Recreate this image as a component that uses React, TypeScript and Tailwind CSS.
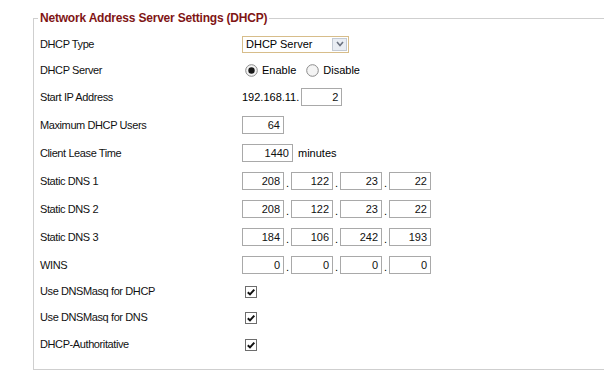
import React from "react";

const font = { fontFamily: '"Liberation Sans", Arial, sans-serif' };

function Box({ value, w = "w-[42px]" }: { value: string; w?: string }) {
  return (
    <span
      className={`${w} h-[18px] border border-[#a9a9a9] bg-white flex items-center justify-end pr-[3px] text-[11px] text-[#111]`}
    >
      {value}
    </span>
  );
}

function IP({ parts }: { parts: string[] }) {
  return (
    <div className="flex items-center">
      {parts.map((p, i) => (
        <React.Fragment key={i}>
          <Box value={p} />
          {i < parts.length - 1 && (
            <span className="w-[7px] text-center self-end pb-[1px] text-[11px] leading-[11px]">.</span>
          )}
        </React.Fragment>
      ))}
    </div>
  );
}

function Radio({ checked }: { checked: boolean }) {
  return (
    <svg width="13" height="13" viewBox="0 0 13 13" className="shrink-0">
      <circle cx="6.5" cy="6.5" r="5.8" fill="#f4f4f4" stroke="#8a8a8a" strokeWidth="1" />
      {checked && <circle cx="6.5" cy="6.5" r="3.2" fill="#1a1a1a" />}
    </svg>
  );
}

function Check() {
  return (
    <svg width="12" height="12" viewBox="0 0 12 12" className="shrink-0">
      <rect x="0.5" y="0.5" width="11" height="11" fill="#fff" stroke="#6d6d6d" />
      <path d="M2.8 6.2 L5 8.4 L9.3 3.6" fill="none" stroke="#111" strokeWidth="2" />
    </svg>
  );
}

function Row({ label, h, children }: { label: string; h: string; children: React.ReactNode }) {
  return (
    <div className={`flex items-center ${h}`}>
      <div className="w-[202px] shrink-0 text-[11px] tracking-[-0.4px] text-[#111]">{label}</div>
      <div className="flex items-center">{children}</div>
    </div>
  );
}

export default function App() {
  return (
    <div className="w-[604px] h-[377px] overflow-hidden bg-white" style={font}>
      <div className="pl-[33px] pt-[10px] w-[700px]">
        <fieldset className="border border-[#cfcfcf] pl-[4px] pb-[11px] w-[640px]">
          <legend className="px-[2px] text-[12px] font-bold text-[#7f1515] leading-[16px] tracking-[-0.2px]">
            Network Address Server Settings (DHCP)
          </legend>
          <div className="pl-[2px] pt-[5px]">
            <Row label="DHCP Type" h="h-[26px]">
              <div className="w-[107px] h-[17px] border border-[#d7bd8a] bg-white flex items-center justify-between text-[11px]">
                <span className="pl-[3px]">DHCP Server</span>
                <span className="w-[15px] h-[13px] mr-[1px] bg-[#e9edf3] border border-[#c3cad4] flex items-center justify-center">
                  <svg width="8" height="6" viewBox="0 0 8 6">
                    <path d="M1 1 L4 4.5 L7 1" fill="none" stroke="#6b7280" strokeWidth="1.6" />
                  </svg>
                </span>
              </div>
            </Row>
            <Row label="DHCP Server" h="h-[26px]">
              <div className="flex items-center text-[11px] pl-[3px]">
                <Radio checked />
                <span className="ml-[4px] mr-[10px]">Enable</span>
                <Radio checked={false} />
                <span className="ml-[4px]">Disable</span>
              </div>
            </Row>
            <Row label="Start IP Address" h="h-[28px]">
              <span className="text-[11px] mr-[2px]">192.168.11.</span>
              <Box value="2" w="w-[41px]" />
            </Row>
            <Row label="Maximum DHCP Users" h="h-[28px]">
              <Box value="64" />
            </Row>
            <Row label="Client Lease Time" h="h-[28px]">
              <Box value="1440" w="w-[51px]" />
              <span className="ml-[5px] text-[11px]">minutes</span>
            </Row>
            <Row label="Static DNS 1" h="h-[28px]">
              <IP parts={["208", "122", "23", "22"]} />
            </Row>
            <Row label="Static DNS 2" h="h-[28px]">
              <IP parts={["208", "122", "23", "22"]} />
            </Row>
            <Row label="Static DNS 3" h="h-[28px]">
              <IP parts={["184", "106", "242", "193"]} />
            </Row>
            <Row label="WINS" h="h-[28px]">
              <IP parts={["0", "0", "0", "0"]} />
            </Row>
            <Row label="Use DNSMasq for DHCP" h="h-[25px]">
              <span className="pl-[3px]"><Check /></span>
            </Row>
            <Row label="Use DNSMasq for DNS" h="h-[27px]">
              <span className="pl-[3px]"><Check /></span>
            </Row>
            <Row label="DHCP-Authoritative" h="h-[27px]">
              <span className="pl-[3px]"><Check /></span>
            </Row>
          </div>
        </fieldset>
      </div>
    </div>
  );
}
